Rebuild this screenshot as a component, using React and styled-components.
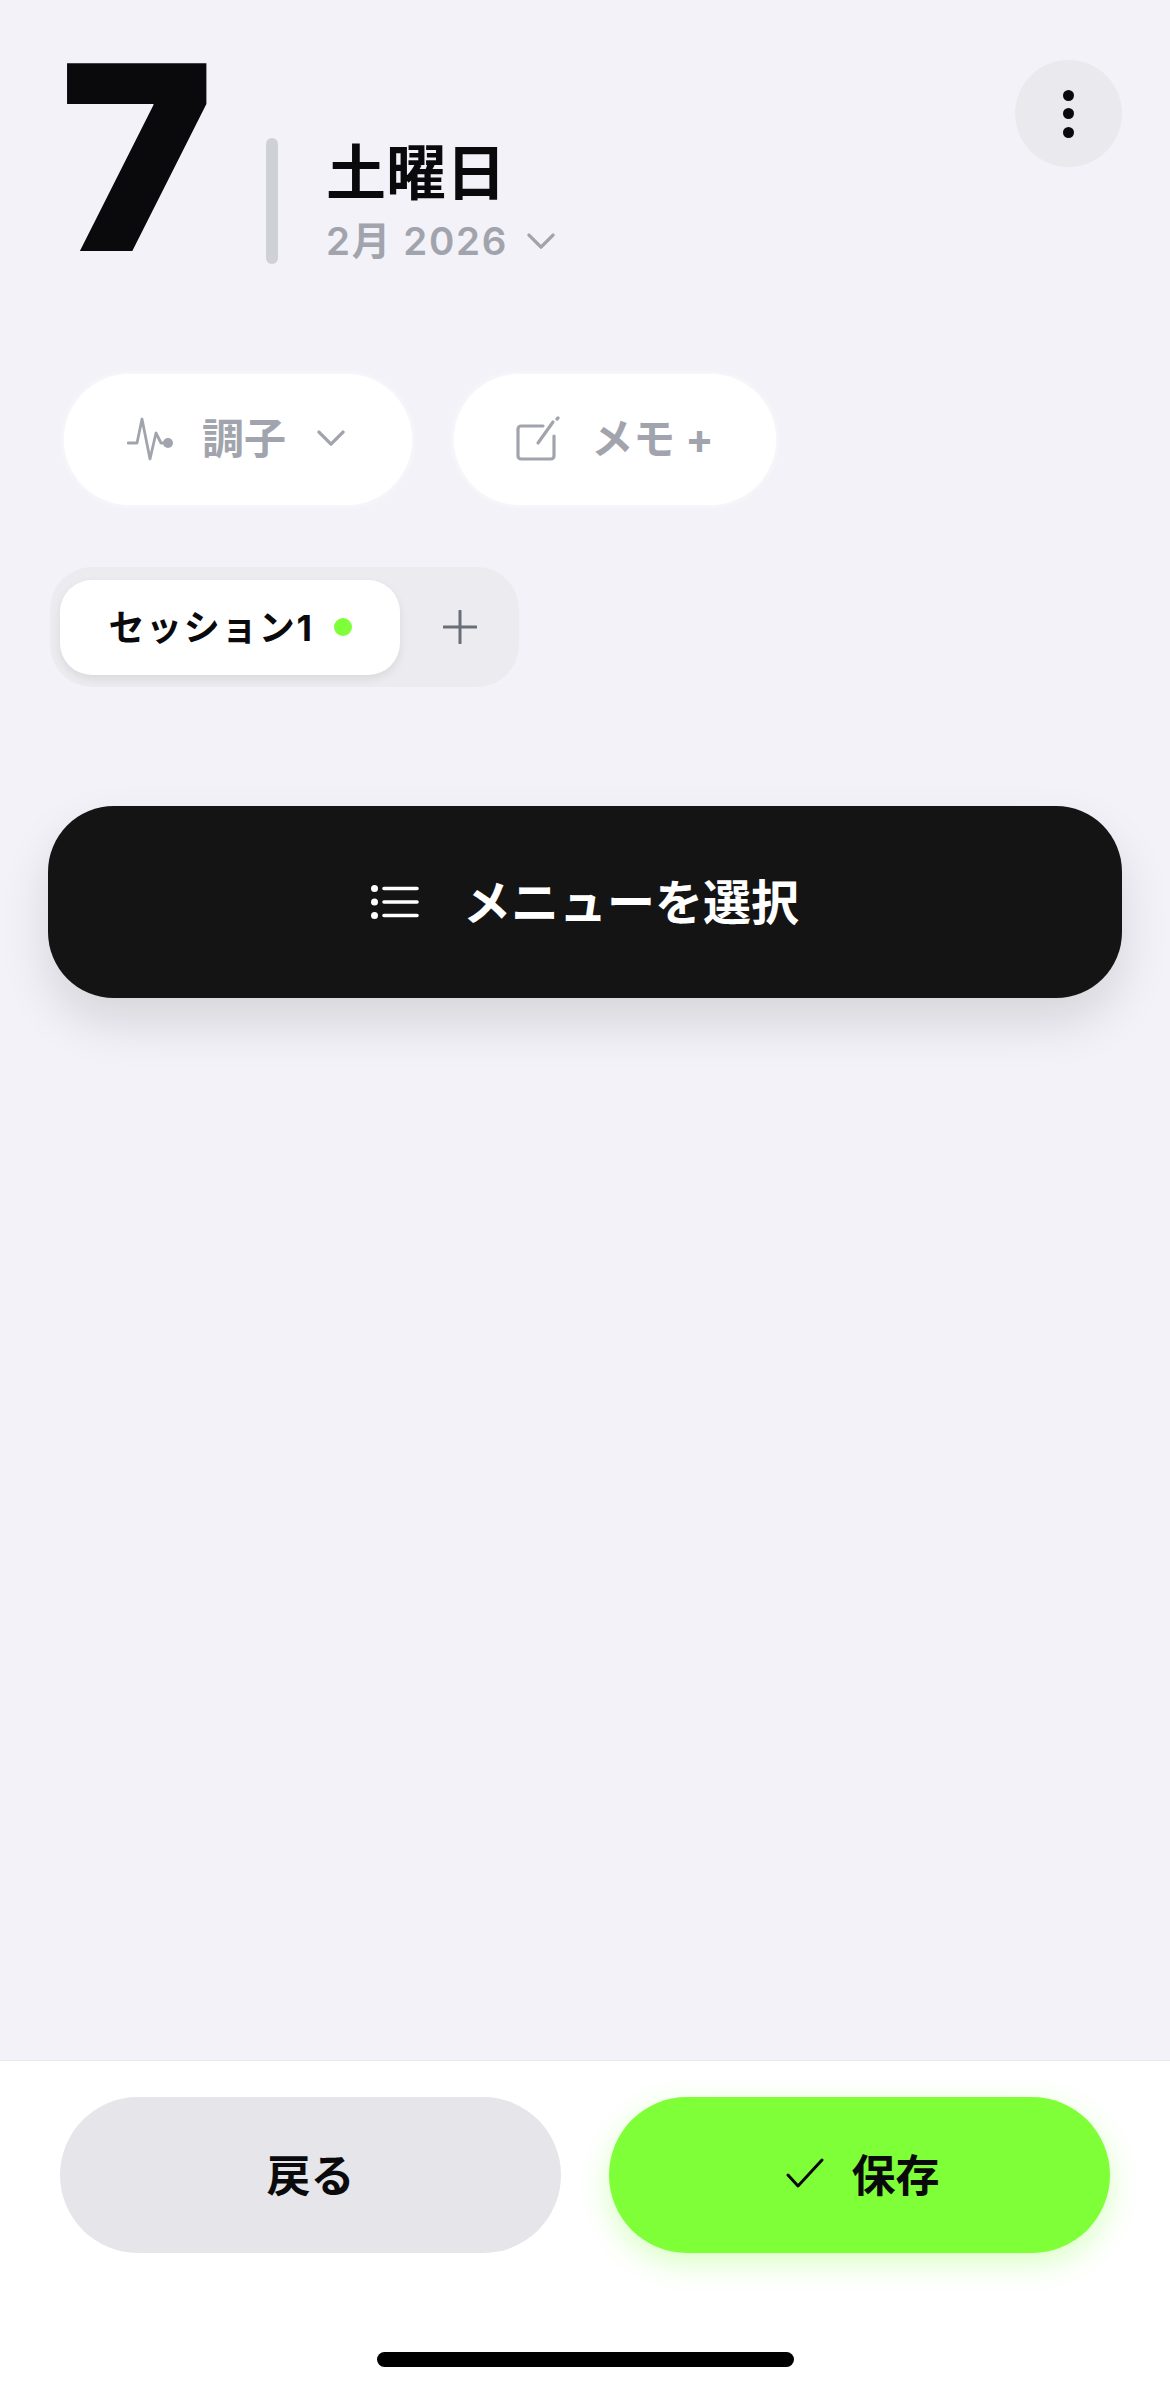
import React from "react";
import styled, { createGlobalStyle } from "styled-components";

const GlobalStyle = createGlobalStyle`
  html, body {
    margin: 0;
    padding: 0;
    background: #f2f2f8;
  }
  * {
    box-sizing: border-box;
  }
`;

const FONT = `Inter, "Noto Sans CJK JP", sans-serif`;

const Page = styled.div`
  width: 1170px;
  height: 2391px;
  display: flex;
  flex-direction: column;
  overflow: hidden;
  background: #f2f2f8;
  font-family: ${FONT};
`;

const Main = styled.main`
  flex: 1;
  display: flex;
  flex-direction: column;
  padding: 60px 48px 0;
`;

const Header = styled.header`
  height: 204px;
  display: flex;
  align-items: flex-start;
  padding-left: 12px;
`;

const DayNumber = styled.div`
  width: 206px;
  height: 190px;
  font-size: 258px;
  font-weight: 900;
  line-height: 194px;
  color: #0a0a0c;
`;

const Divider = styled.div`
  width: 12px;
  height: 126px;
  margin-top: 78px;
  border-radius: 6px;
  background: #d0d0d7;
`;

const DateBlock = styled.div`
  margin: 77px 0 0 48px;
  display: flex;
  flex-direction: column;
`;

const Weekday = styled.div`
  font-size: 60px;
  font-weight: 700;
  line-height: 72px;
  color: #0a0a0c;
`;

const MonthRow = styled.div`
  display: flex;
  align-items: center;
  gap: 19px;
  margin-top: 8px;
  font-size: 38.5px;
  font-weight: 600;
  line-height: 48px;
  letter-spacing: 1.7px;
  color: #a2a4ad;
`;

const MoreButton = styled.button`
  margin-left: auto;
  width: 107px;
  height: 107px;
  border: 0;
  border-radius: 50%;
  background: #e9e9ee;
  display: flex;
  flex-direction: column;
  align-items: center;
  justify-content: center;
  gap: 7.5px;
  padding: 0;
`;

const MoreDot = styled.span`
  width: 11px;
  height: 11px;
  border-radius: 50%;
  background: #0a0a0c;
`;

const PillRow = styled.div`
  display: flex;
  gap: 42px;
  margin: 110px 0 0 16px;
`;

const Pill = styled.button`
  height: 131px;
  width: ${(p) => p.$width}px;
  border: 0;
  border-radius: 66px;
  background: #fff;
  box-shadow: 0 0 6px rgba(255, 255, 255, 0.9);
  display: flex;
  align-items: center;
  justify-content: center;
  gap: ${(p) => p.$gap}px;
  padding: 0 ${(p) => p.$shift || 0}px 8px 0;
  font-family: ${FONT};
  font-size: 42px;
  font-weight: 700;
  color: #a2a4ad;

  svg {
    margin-top: 6px;
  }
`;

const PillChevron = styled.span`
  display: flex;
  margin-left: 4px;
`;

const SessionTrack = styled.div`
  align-self: flex-start;
  display: flex;
  align-items: center;
  width: 469px;
  height: 120px;
  margin: 62px 0 0 2px;
  padding: 0 42px 0 10px;
  border-radius: 42px;
  background: #ebebf0;
`;

const SessionTab = styled.div`
  width: 340px;
  height: 95px;
  padding-bottom: 4px;
  border-radius: 32px;
  background: #fff;
  box-shadow: 0 4px 10px rgba(0, 0, 0, 0.08);
  display: flex;
  align-items: center;
  justify-content: center;
  gap: 20px;
  font-size: 36px;
  font-weight: 700;
  letter-spacing: 1.6px;
  color: #0a0a0c;
`;

const StatusDot = styled.span`
  width: 18px;
  height: 18px;
  margin-top: 4px;
  border-radius: 50%;
  background: #7fff37;
`;

const AddSession = styled.div`
  margin-left: auto;
  display: flex;
  color: #6b6e78;
`;

const MenuButton = styled.button`
  height: 192px;
  margin-top: 119px;
  padding: 0 0 6px;
  border: 0;
  border-radius: 66px;
  background: #141415;
  box-shadow: 0 24px 50px rgba(0, 0, 0, 0.12);
  display: flex;
  align-items: center;
  justify-content: center;
  gap: 44px;
  font-family: ${FONT};
  font-size: 48px;
  font-weight: 600;
  color: #fff;

  svg {
    margin-top: 6px;
  }
`;

const Footer = styled.footer`
  height: 331px;
  display: flex;
  flex-direction: column;
  align-items: center;
  padding-top: 36px;
  border-top: 1px solid #e9e9ee;
  background: #fff;
`;

const FooterActions = styled.div`
  width: 100%;
  display: grid;
  grid-template-columns: 1fr 1fr;
  gap: 48px;
  padding: 0 60px;
`;

const FooterButton = styled.button`
  height: 156px;
  padding: 0 0 4px ${(p) => (p.$primary ? 6 : 0)}px;
  border: 0;
  border-radius: 78px;
  background: ${(p) => (p.$primary ? "#7fff37" : "#e5e5ea")};
  box-shadow: ${(p) => (p.$primary ? "0 10px 30px rgba(127, 255, 55, 0.3)" : "none")};
  display: flex;
  align-items: center;
  justify-content: center;
  gap: 28px;
  font-family: ${FONT};
  font-size: 44px;
  font-weight: 700;
  color: #0a0a0c;
`;

const HomeBar = styled.div`
  width: 417px;
  height: 15px;
  margin-top: 99px;
  border-radius: 8px;
  background: #000;
`;

const Chevron = ({ size }) => (
  <svg width={size} height={size * 0.58} viewBox="0 0 28 16" fill="none" stroke="currentColor" strokeWidth="3.4" strokeLinecap="round" strokeLinejoin="round">
    <path d="M2 2l12 12L26 2" />
  </svg>
);

const PulseIcon = () => (
  <svg width="48" height="44" viewBox="0 0 48 44" fill="none" stroke="currentColor" strokeWidth="2.8" strokeLinecap="round" strokeLinejoin="round">
    <path d="M1 26h9l5-24 8 40 6-26 5 10h6" />
    <circle cx="41" cy="26" r="5" fill="currentColor" stroke="none" />
  </svg>
);

const NoteIcon = () => (
  <svg width="45" height="45" viewBox="0 0 45 45" fill="none" stroke="currentColor" strokeWidth="3.2" strokeLinecap="round" strokeLinejoin="round">
    <path d="M27 10H5a3 3 0 0 0-3 3v27a3 3 0 0 0 3 3h30a3 3 0 0 0 3-3V20" />
    <path d="M22 27L37 6" />
    <path d="M41 3l1-1" />
  </svg>
);

const ListIcon = () => (
  <svg width="48" height="34" viewBox="0 0 48 34" fill="none" stroke="#fff" strokeWidth="3.6" strokeLinecap="round">
    <circle cx="3.5" cy="3.5" r="3.5" fill="#fff" stroke="none" />
    <circle cx="3.5" cy="17" r="3.5" fill="#fff" stroke="none" />
    <circle cx="3.5" cy="30.5" r="3.5" fill="#fff" stroke="none" />
    <path d="M13 3.5h33M13 17h33M13 30.5h33" />
  </svg>
);

const PlusIcon = () => (
  <svg width="34" height="34" viewBox="0 0 34 34" fill="none" stroke="currentColor" strokeWidth="3" strokeLinecap="round">
    <path d="M17 1v32M1 17h32" />
  </svg>
);

const CheckIcon = () => (
  <svg width="38" height="30" viewBox="0 0 38 30" fill="none" stroke="currentColor" strokeWidth="3" strokeLinecap="round" strokeLinejoin="round">
    <path d="M2 17l10 11L36 2" />
  </svg>
);

const App = () => {
  return (
    <Page>
      <GlobalStyle />
      <Main>
        <Header>
          <DayNumber>7</DayNumber>
          <Divider />
          <DateBlock>
            <Weekday>土曜日</Weekday>
            <MonthRow>
              2月 2026
              <Chevron size={28} />
            </MonthRow>
          </DateBlock>
          <MoreButton aria-label="more">
            <MoreDot />
            <MoreDot />
            <MoreDot />
          </MoreButton>
        </Header>

        <PillRow>
          <Pill $width={348} $gap={27} $shift={4}>
            <PulseIcon />
            調子
            <PillChevron>
              <Chevron size={28} />
            </PillChevron>
          </Pill>
          <Pill $width={322} $gap={30}>
            <NoteIcon />
            メモ +
          </Pill>
        </PillRow>

        <SessionTrack>
          <SessionTab>
            セッション1
            <StatusDot />
          </SessionTab>
          <AddSession>
            <PlusIcon />
          </AddSession>
        </SessionTrack>

        <MenuButton>
          <ListIcon />
          メニューを選択
        </MenuButton>
      </Main>

      <Footer>
        <FooterActions>
          <FooterButton>戻る</FooterButton>
          <FooterButton $primary>
            <CheckIcon />
            保存
          </FooterButton>
        </FooterActions>
        <HomeBar />
      </Footer>
    </Page>
  );
};

export default App;
